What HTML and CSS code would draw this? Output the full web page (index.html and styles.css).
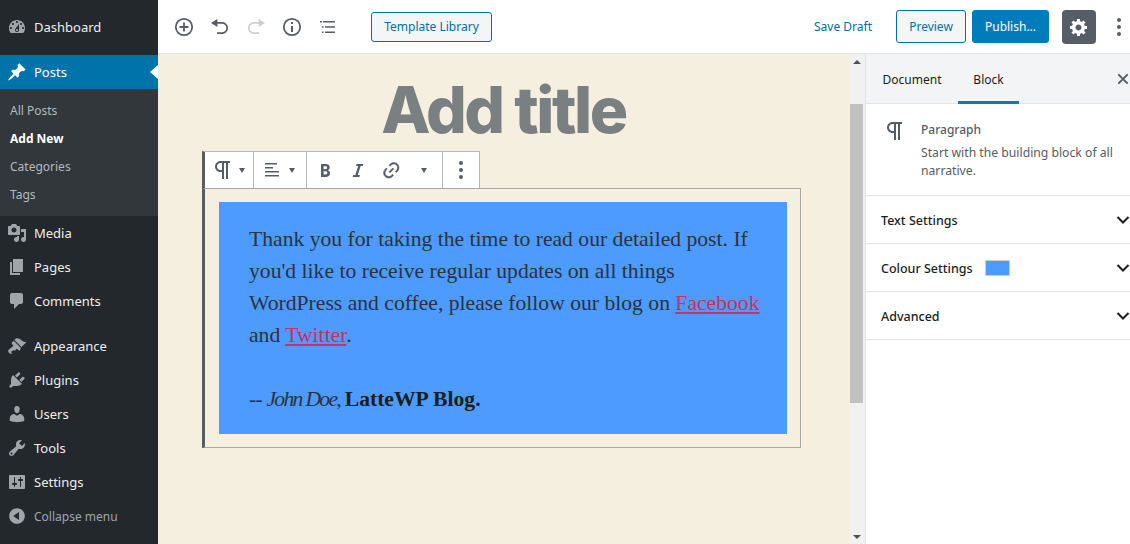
FILE: index.html
```html
<!DOCTYPE html>
<html lang="en">
<head>
<meta charset="utf-8">
<title>Add New Post</title>
<link rel="stylesheet" href="styles.css">
</head>
<body>
<div class="app">
  <nav class="adminmenu">
    <ul class="menu menu-first">
      <li class="item"><svg class="mi" viewBox="0 0 20 20"><path d="M3.76 16h12.48c1.1-1.37 1.76-3.11 1.76-5 0-4.42-3.58-8-8-8s-8 3.58-8 8c0 1.89.66 3.63 1.76 5zM10 4c.55 0 1 .45 1 1s-.45 1-1 1-1-.45-1-1 .45-1 1-1zM6 6c.55 0 1 .45 1 1s-.45 1-1 1-1-.45-1-1 .45-1 1-1zm8 0c.55 0 1 .45 1 1s-.45 1-1 1-1-.45-1-1 .45-1 1-1zm-5.37 5.55L12 7v6c0 1.1-.9 2-2 2s-2-.9-2-2c0-.57.24-1.08.63-1.45zM4 10c.55 0 1 .45 1 1s-.45 1-1 1-1-.45-1-1 .45-1 1-1zm12 0c.55 0 1 .45 1 1s-.45 1-1 1-1-.45-1-1 .45-1 1-1zm-5 3c0-.55-.45-1-1-1s-1 .45-1 1 .45 1 1 1 1-.45 1-1z"/></svg><span>Dashboard</span></li>
    </ul>
    <ul class="menu menu-group">
      <li class="item item-current"><svg class="mi" viewBox="0 0 20 20"><path d="M10.44 3.02l1.82-1.82 6.36 6.35-1.83 1.82c-1.05-.68-2.48-.57-3.41.36l-.75.75c-.92.93-1.04 2.35-.35 3.41l-1.83 1.82-2.41-2.41-2.8 2.79c-.42.42-3.38 2.71-3.8 2.29s1.86-3.39 2.28-3.81l2.79-2.79L4.1 9.36l1.83-1.82c1.05.69 2.48.57 3.4-.36l.75-.75c.93-.92 1.05-2.35.36-3.41z"/></svg><span>Posts</span></li>
      <li class="submenu">
        <span class="sub">All Posts</span>
        <span class="sub sub-active">Add New</span>
        <span class="sub">Categories</span>
        <span class="sub">Tags</span>
      </li>
      <li class="item"><svg class="mi" viewBox="0 0 20 20"><path d="M13 11V4c0-.55-.45-1-1-1h-1.67L9 1H5L3.67 3H2c-.55 0-1 .45-1 1v7c0 .55.45 1 1 1h10c.55 0 1-.45 1-1zM7 4.5c1.38 0 2.5 1.12 2.5 2.5S8.38 9.5 7 9.5 4.5 8.38 4.5 7 5.62 4.5 7 4.5zM14 6h5v10.5c0 1.38-1.12 2.5-2.5 2.5S14 17.88 14 16.5s1.12-2.5 2.5-2.5c.17 0 .34.02.5.05V9h-3V6zm-4 8.05V13h2v3.5c0 1.38-1.12 2.5-2.5 2.5S7 17.88 7 16.5 8.12 14 9.5 14c.17 0 .34.02.5.05z"/></svg><span>Media</span></li>
      <li class="item"><svg class="mi" viewBox="0 0 20 20"><path d="M6 15V2h10v13H6zm-1 1h8v2H3V5h2v11z"/></svg><span>Pages</span></li>
      <li class="item"><svg class="mi" viewBox="0 0 20 20"><path d="M5 2h9c1.1 0 2 .9 2 2v7c0 1.1-.9 2-2 2h-2l-5 5v-5H5c-1.1 0-2-.9-2-2V4c0-1.1.9-2 2-2z"/></svg><span>Comments</span></li>
    </ul>
    <ul class="menu menu-group">
      <li class="item"><svg class="mi" viewBox="0 0 20 20"><path d="M14.48 11.06L7.41 3.99l1.5-1.5c.5-.56 2.3-.47 3.51.32 1.21.8 1.43 1.28 2.91 2.1 1.18.64 2.45 1.26 4.45.85zm-.71.71L6.7 4.7 4.93 6.47c-.39.39-.39 1.02 0 1.41l1.06 1.06c.39.39.39 1.03 0 1.42-.6.6-1.43 1.11-2.21 1.69-.35.26-.7.53-1.01.84C1.43 13.23.91 14.4 1.4 16c.71 1.79 2.7 1.87 4.03 1.69-.98-.4-1.3-1.2-.9-2.1.4-.9 1.7-1.2 2.97-1.09.78.06 1.27-.7 1.6-1.33.39-.39 1.02-.39 1.41 0l1.06 1.06c.39.39 1.02.39 1.41 0z"/></svg><span>Appearance</span></li>
      <li class="item"><svg class="mi" viewBox="0 0 20 20"><path d="M13.11 4.36L9.87 7.6 8 5.73l3.24-3.24c.35-.34 1.05-.2 1.56.32.52.51.66 1.21.31 1.55zm-8 1.77l.91-1.12 9.01 9.01-1.19.84c-.71.71-2.63 1.16-3.82 1.16H6.14L4.9 17.26c-.59.59-1.54.59-2.12 0-.59-.58-.59-1.53 0-2.12l1.24-1.24v-3.88c0-1.13.4-3.19 1.09-3.89zm7.26 3.97l3.24-3.24c.34-.35 1.04-.21 1.55.31.52.51.66 1.21.31 1.55l-3.24 3.25z"/></svg><span>Plugins</span></li>
      <li class="item"><svg class="mi" viewBox="0 0 20 20"><path d="M10 9.25c-2.27 0-2.73-3.44-2.73-3.44C7 4.02 7.82 2 9.97 2c2.16 0 2.98 2.02 2.71 3.81 0 0-.41 3.44-2.68 3.44zm0 2.57L12.72 10c2.39 0 4.52 2.33 4.52 4.53v2.49s-3.65 1.13-7.24 1.13c-3.65 0-7.24-1.13-7.24-1.13v-2.49c0-2.25 1.94-4.48 4.47-4.48z"/></svg><span>Users</span></li>
      <li class="item"><svg class="mi" viewBox="0 0 20 20"><path d="M16.68 9.77c-1.34 1.34-3.3 1.67-4.95.99l-5.41 6.52c-.99.99-2.59.99-3.58 0s-.99-2.59 0-3.57l6.52-5.42c-.68-1.65-.35-3.61.99-4.95 1.28-1.28 3.12-1.62 4.72-1.06l-2.89 2.89 2.82 2.82 2.86-2.87c.53 1.58.18 3.39-1.08 4.65zM3.81 16.21c.4.39 1.04.39 1.43 0 .4-.4.4-1.04 0-1.43-.39-.4-1.03-.4-1.43 0-.39.39-.39 1.03 0 1.43z"/></svg><span>Tools</span></li>
      <li class="item"><svg class="mi" viewBox="0 0 20 20"><path d="M18 16V4c0-.55-.45-1-1-1H3c-.55 0-1 .45-1 1v12c0 .55.45 1 1 1h14c.55 0 1-.45 1-1zM8 11h1c.55 0 1 .45 1 1s-.45 1-1 1H8v1.5c0 .28-.22.5-.5.5s-.5-.22-.5-.5V13H6c-.55 0-1-.45-1-1s.45-1 1-1h1V5.5c0-.28.22-.5.5-.5s.5.22.5.5V11zm5-2h-1c-.55 0-1-.45-1-1s.45-1 1-1h1V5.5c0-.28.22-.5.5-.5s.5.22.5.5V7h1c.55 0 1 .45 1 1s-.45 1-1 1h-1v5.5c0 .28-.22.5-.5.5s-.5-.22-.5-.5V9z"/></svg><span>Settings</span></li>
      <li class="item item-muted"><svg class="mi" viewBox="0 0 20 20"><path d="M10 2.16c4.33 0 7.84 3.51 7.84 7.84s-3.51 7.84-7.84 7.84S2.16 14.33 2.16 10 5.71 2.16 10 2.16zm2 11.72V6.12L6.18 9.97z"/></svg><span>Collapse menu</span></li>
    </ul>
  </nav>

  <div class="workspace">
    <header class="topbar">
      <div class="tools">
        <svg class="ti" viewBox="0 0 24 24"><circle class="ol" cx="12" cy="12" r="8.2"/><path class="ol" d="M12 7.5v9M7.500 12h9"/></svg>
        <svg class="ti" viewBox="-2 -2 24 24"><path d="M12 5H7.400V2L1 6l6.400 4V6.700H12c2.400 0 4.300 1.900 4.300 4.300s-1.900 4.300-4.300 4.300H7v1.700h5c3.300 0 6-2.700 6-6s-2.700-6-6-6z"/></svg>
        <svg class="ti ti-off" viewBox="-2 -2 24 24"><path d="M8 5h4.600V2L19 6l-6.400 4V6.700H8c-2.400 0-4.300 1.900-4.300 4.300s1.900 4.300 4.300 4.300h5v1.700H8c-3.300 0-6-2.700-6-6s2.700-6 6-6z"/></svg>
        <svg class="ti" viewBox="0 0 24 24"><circle class="ol" cx="12" cy="12" r="8.200"/><path d="M11 11h2v6h-2zM11 7h2v2h-2z"/></svg>
        <svg class="ti" viewBox="0 0 24 24"><path d="M7 6h12v1.500H7zM9 11.300h10v1.500H9zM9 16.500h10V18H9zM4 6h2v1.500H4zM6 11.300h1.600v1.500H6zM6 16.500h1.600V18H6z"/></svg>
      </div>
      <button class="btn btn-outline btn-library">Template Library</button>
      <span class="save">Save Draft</span>
      <button class="btn btn-outline btn-preview">Preview</button>
      <button class="btn btn-primary">Publish...</button>
      <span class="gear"><svg viewBox="0 0 20 20"><path d="M18 12h-2.180c-.17.7-.44 1.350-.81 1.930l1.540 1.540-2.100 2.100-1.540-1.540c-.58.36-1.230.63-1.910.79V19H8v-2.180c-.68-.16-1.330-.43-1.910-.79l-1.540 1.540-2.120-2.120 1.540-1.540c-.36-.58-.63-1.230-.79-1.910H1V9.030h2.170c.16-.7.44-1.350.8-1.940L2.430 5.550l2.100-2.100 1.540 1.540c.58-.37 1.240-.64 1.930-.81V2h3v2.180c.68.16 1.330.43 1.910.79l1.540-1.540 2.120 2.120-1.540 1.540c.36.59.64 1.240.8 1.940H18V12zm-8.500 1.500c1.660 0 3-1.340 3-3s-1.340-3-3-3-3 1.340-3 3 1.340 3 3 3z"/></svg></span>
      <span class="kebab"><i></i><i></i><i></i></span>
    </header>

    <div class="panes">
      <main class="editor">
        <h1 class="title">Add title</h1>
        <div class="block-wrap">
          <div class="toolbar">
            <div class="tgroup tg-1">
              <svg class="bi" viewBox="0 0 24 24"><path d="M11 5v7H9.500C7.600 12 6 10.400 6 8.500S7.600 5 9.500 5H11m8-2H9.500C6.500 3 4 5.500 4 8.500S6.500 14 9.500 14H11v7h2V5h2v16h2V5h2V3z"/></svg><i class="caret caret-para"></i>
            </div>
            <div class="tgroup tg-2">
              <svg class="bi bi-s" viewBox="0 0 20 20"><path d="M2 3h12v1.600H2zM2 7h8v1.600H2zM2 11h14v1.600H2zM2 15h14v1.600H2z"/></svg><i class="caret"></i>
            </div>
            <div class="tgroup tg-3">
              <svg class="bi bi-s" viewBox="0 0 20 20"><path fill-rule="evenodd" d="M6 4v13h4.540c1.370 0 2.460-.33 3.260-1 .8-.66 1.200-1.580 1.200-2.770 0-.84-.17-1.510-.51-2.010s-.9-.85-1.670-1.030v-.09c.57-.1 1.020-.4 1.360-.9s.51-1.130.51-1.910c0-1.140-.39-1.980-1.170-2.500C12.750 4.260 11.500 4 9.780 4H6zm2.570 5.150V6.260h1.360c.73 0 1.270.11 1.610.32.34.22.51.58.51 1.070 0 .54-.16.92-.47 1.150s-.82.35-1.510.35h-1.500zm0 2.190h1.600c1.440 0 2.160.5 2.160 1.510 0 .56-.17.98-.5 1.250s-.85.41-1.560.41H8.570v-3.170z"/></svg>
              <svg class="bi bi-s" viewBox="0 0 20 20"><path d="M14.780 6h-2.130l-2.800 9h2.120l-.62 2H4.600l.62-2h2.140l2.800-9H8.030l.62-2h6.750z"/></svg>
              <svg class="bi bi-link" viewBox="0 0 24 24"><path transform="rotate(-45 12 12)" d="M15.600 7.200H14v1.500h1.600c2 0 3.700 1.700 3.700 3.700s-1.700 3.700-3.700 3.700H14v1.500h1.600c2.800 0 5.200-2.300 5.200-5.200 0-2.900-2.300-5.200-5.200-5.200zM4.700 12.400c0-2 1.700-3.700 3.700-3.700H10V7.200H8.400c-2.900 0-5.200 2.300-5.200 5.200 0 2.900 2.300 5.200 5.200 5.200H10v-1.500H8.400c-2 0-3.700-1.700-3.700-3.700zm4.600.9h5.300v-1.500H9.300v1.500z"/></svg>
              <i class="caret caret-more"></i>
            </div>
            <div class="tgroup tg-4"><span class="kebab kebab-small"><i></i><i></i><i></i></span></div>
          </div>
          <div class="block">
            <div class="para-bg">
              <p class="para">Thank you for taking the time to read our detailed post. If you'd like to receive regular updates on all things WordPress and coffee, please follow our blog on <a href="#">Facebook</a> and <a href="#">Twitter</a>.</p>
              <p class="para para-sign">-- <em>John Doe,</em> <strong>LatteWP Blog.</strong></p>
            </div>
          </div>
        </div>
      </main>

      <div class="scrollbar">
        <i class="arrow arrow-up"></i>
        <div class="thumb"></div>
        <i class="arrow arrow-down"></i>
      </div>

      <aside class="inspector">
        <div class="tabs">
          <span class="tab">Document</span>
          <span class="tab tab-active">Block</span>
          <svg class="close" viewBox="0 0 24 24"><path d="M4 4l16 16M20 4L4 20"/></svg>
        </div>
        <div class="card">
          <svg class="card-icon" viewBox="0 0 24 24"><path d="M11 5v7H9.500C7.600 12 6 10.400 6 8.500S7.600 5 9.500 5H11m8-2H9.500C6.500 3 4 5.500 4 8.500S6.500 14 9.500 14H11v7h2V5h2v16h2V5h2V3z"/></svg>
          <div class="card-body">
            <div class="card-title">Paragraph</div>
            <div class="card-desc">Start with the building block of all narrative.</div>
          </div>
        </div>
        <div class="panel"><span>Text Settings</span><svg class="chev" viewBox="0 0 14 14"><path d="M1.500 4l5.500 5.500L12.500 4"/></svg></div>
        <div class="panel"><span>Colour Settings</span><i class="swatch"></i><svg class="chev" viewBox="0 0 14 14"><path d="M1.500 4l5.500 5.500L12.500 4"/></svg></div>
        <div class="panel"><span>Advanced</span><svg class="chev" viewBox="0 0 14 14"><path d="M1.500 4l5.500 5.500L12.500 4"/></svg></div>
      </aside>
    </div>
  </div>
</div>
</body>
</html>
```
FILE: styles.css
```css
* { box-sizing: border-box; }
html, body { margin: 0; height: 100%; overflow: hidden; }
body { font-family: "Noto Sans", "Open Sans", sans-serif; font-size: 13px; color: #191e23; background: #fff; }
ul { list-style: none; margin: 0; padding: 0; }
button { font: inherit; }

.app { display: flex; height: 544px; width: 1130px; }

/* admin menu */
.adminmenu { width: 158px; flex: none; background: #23282d; color: #eee; padding-top: 10px; }
.menu-group { margin-top: 11px; }
.item { height: 34px; display: flex; align-items: center; gap: 7px; padding-left: 7px; font-size: 13px; position: relative; }
.mi { width: 20px; height: 20px; fill: #a0a5aa; flex: none; }
.item-current { background: #0073aa; color: #fff; }
.item-current .mi { fill: #fff; }
.item-current::after { content: ""; position: absolute; right: 0; top: 10px; border: 7px solid transparent; border-right: 8px solid #fff; border-left: 0; }
.item-muted { color: #a0a5aa; font-size: 12px; }
.submenu { background: #32373c; padding: 8px 0 7px 10px; display: flex; flex-direction: column; color: #b4b9be; font-size: 12px; }
.sub { height: 28px; line-height: 28px; }
.sub-active { color: #fff; font-weight: 700; }

/* top bar */
.workspace { flex: 1; min-width: 0; display: flex; flex-direction: column; }
.topbar { height: 54px; flex: none; display: flex; align-items: center; border-bottom: 1px solid #e2e4e7; background: #fff; padding-right: 9px; font-size: 12px; }
.tools { display: flex; gap: 12px; margin-left: 14px; width: 190px; flex: none; }
.ti { width: 24px; height: 24px; fill: #555d66; flex: none; }
.ti-off { fill: #ccd0d4; }
.ol { fill: none; stroke: #555d66; stroke-width: 1.8; }
.btn { border-radius: 3px; height: 33px; cursor: pointer; padding: 0; }
.btn-outline { background: #f3f5f6; border: 1px solid #0071a1; color: #0071a1; }
.btn-library { width: 121px; height: 30px; margin-left: 9px; font-size: 12px; }
.save { color: #0071a1; font-size: 12px; margin-left: auto; white-space: nowrap; }
.btn-preview { width: 70px; margin-left: 24px; font-size: 12px; }
.btn-primary { width: 77px; margin-left: 6px; background: #007cba; border: 1px solid #007cba; color: #fff; font-size: 12px; }
.gear { width: 34px; height: 34px; margin-left: 13px; background: #555d66; border-radius: 4px; display: flex; align-items: center; justify-content: center; flex: none; }
.gear svg { width: 20px; height: 20px; fill: #fff; }
.kebab { display: flex; flex-direction: column; gap: 3px; margin-left: 21px; flex: none; }
.kebab i { width: 4px; height: 4px; border-radius: 50%; background: #555d66; display: block; }

/* panes */
.panes { flex: 1; display: flex; min-height: 0; }
.editor { width: 691px; flex: none; background: #f5efe0; overflow: hidden; }
.title { margin: 18px 0 0; height: 79px; text-align: center; font-family: Inter, sans-serif; font-weight: 800; font-size: 64px; line-height: 76px; letter-spacing: -2.45px; color: #7a7f81; }
.block-wrap { margin-left: 44px; width: 599px; }
.toolbar { display: flex; height: 37px; width: 278px; background: #fff; border: 1px solid #b5b9bd; border-left: 3px solid #555d66; border-bottom: 0; }
.tgroup { display: flex; align-items: center; border-right: 1px solid #b5b9bd; }
.tgroup:last-child { border-right: 0; }
.tg-1 { width: 49px; padding-left: 6px; }
.tg-2 { width: 53px; padding-left: 9px; }
.tg-3 { width: 136px; padding-left: 8px; gap: 13px; }
.tg-4 { flex: 1; justify-content: center; }
.bi { width: 24px; height: 24px; fill: #555d66; flex: none; }
.bi-s { width: 20px; height: 20px; }
.bi-link { width: 24px; height: 24px; margin-left: -2px; stroke: #555d66; stroke-width: .5; }
.caret { width: 0; height: 0; border: 3px solid transparent; border-top: 5px solid #555d66; border-bottom: 0; margin-left: 6px; flex: none; }
.caret-para { margin-left: 4px; }
.caret-more { margin-left: 5px; }
.kebab-small { margin: 0; gap: 3px; }
.block { border: 1px solid #a5a9a5; border-left: 3px solid #555d66; padding: 13px 13px 13px 14px; height: 260px; }
.para-bg { background: #4d9bff; padding: 21px 25px 0 30px; height: 232px; }
.para { margin: 0 0 32px; font-family: "Liberation Serif", "Times New Roman", serif; font-size: 21.65px; line-height: 32px; color: #2a3340; }
.para a { color: #cf2e5e; }
.para-sign { margin: 0; letter-spacing: -.8px; }
.para-sign em { letter-spacing: -1.7px; }
.para-sign strong { color: #191e23; letter-spacing: 0; }

/* scrollbar */
.scrollbar { width: 17px; flex: none; background: #f1f1f1; position: relative; display: flex; flex-direction: column; align-items: center; border-right: 1px solid #e2e4e7; padding-top: 50px; }
.thumb { width: 13px; height: 299px; background: #c1c1c1; margin-right: 1px; }
.arrow { position: absolute; left: 4px; width: 0; height: 0; border: 4px solid transparent; }
.arrow-up { top: 6px; border-bottom: 4px solid #505050; border-top: 0; }
.arrow-down { bottom: 5px; border-top: 4px solid #505050; border-bottom: 0; }

/* inspector */
.inspector { width: 264px; flex: none; background: #fff; }
.tabs { height: 50px; background: #f3f4f5; border-bottom: 1px solid #e2e4e7; display: flex; align-items: stretch; position: relative; padding-left: 4px; font-size: 12px; }
.tab { width: 84px; text-align: center; line-height: 51px; color: #191e23; }
.tab-active { width: 61px; margin-left: 4px; height: 50px; border-bottom: 3px solid #007cba; }
.close { position: absolute; right: 0; top: 18px; width: 14px; height: 14px; fill: none; stroke: #555d66; stroke-width: 3.4; }
.card { height: 92px; border-bottom: 1px solid #e2e4e7; display: flex; padding: 17px 0 0 16px; color: #555d66; }
.card-icon { width: 24px; height: 24px; fill: #555d66; flex: none; margin-top: -2px; margin-left: 1px; }
.card-title { font-size: 12px; line-height: 18px; font-weight: 500; margin-bottom: 5px; }
.card-body { margin-left: 14px; width: 200px; }
.card-desc { font-size: 12.2px; line-height: 18px; }
.panel { height: 48px; border-bottom: 1px solid #e2e4e7; display: flex; align-items: center; padding: 2px 0 0 15px; font-size: 12.5px; font-weight: 500; color: #191e23; position: relative; }
.swatch { width: 25px; height: 16px; background: #4d9bff; border: 1px solid #ccd0d4; margin: -2px 0 0 12px; }
.chev { position: absolute; right: 0; top: 17px; width: 14px; height: 14px; fill: none; stroke: #191e23; stroke-width: 2; }
```
